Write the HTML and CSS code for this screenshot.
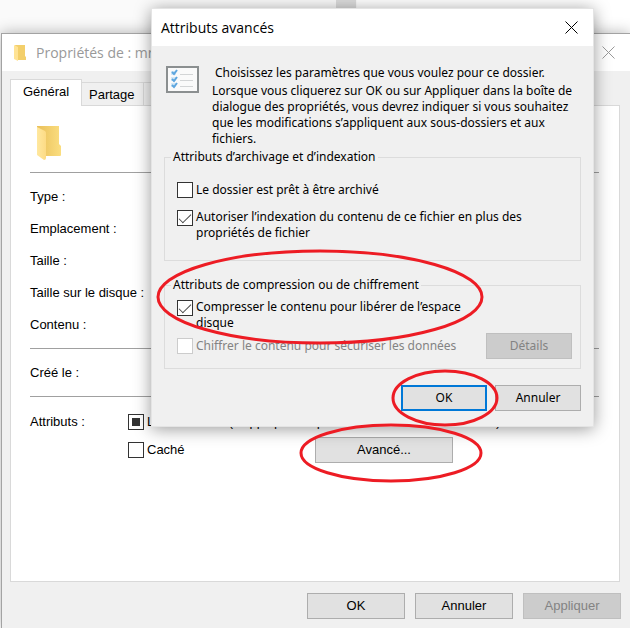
FILE: index.html
```html
<!DOCTYPE html>
<html lang="fr">
<head>
<meta charset="utf-8">
<title>Attributs avancés</title>
<link rel="stylesheet" href="styles.css">
</head>
<body>
<div class="backdrop"><span class="backdrop-bar"></span></div>

<main class="window properties">
  <header class="titlebar titlebar-inactive">
    <svg class="title-icon" width="14" height="18" viewBox="0 0 14 18" aria-hidden="true">
      <path fill="#f3cf6b" d="M1 1h10v11l1 1v3H4z"/>
      <path fill="#ffe394" d="M0 1l4 2v14l-4-2z"/>
    </svg>
    <h1>Propriétés de : mrtools</h1>
    <button class="close" aria-label="Fermer">
      <svg width="13" height="13" viewBox="0 0 13 13" aria-hidden="true"><path d="M.5.5l12 12M12.5.5l-12 12"/></svg>
    </button>
  </header>
  <nav class="tabs">
    <button class="tab tab-selected">Général</button>
    <button class="tab">Partage</button>
    <button class="tab">Sécurité</button>
  </nav>
  <section class="panel">
    <div class="summary">
      <svg width="26" height="36" viewBox="0 0 26 36" aria-hidden="true">
        <defs>
          <linearGradient id="back" x1="0" x2="1"><stop offset="0" stop-color="#e9bf59"/><stop offset="1" stop-color="#fbde80"/></linearGradient>
          <linearGradient id="front" x1="0" x2="1"><stop offset="0" stop-color="#ffe89f"/><stop offset="1" stop-color="#fddb85"/></linearGradient>
        </defs>
        <path fill="url(#back)" d="M0 0h22v18l2 2v9q0 1-1 1H9L1 28z"/>
        <path fill="url(#front)" d="M0 1l8 4q1 1 1 2v25q0 2-2 2L0 29z"/>
      </svg>
    </div>
    <hr>
    <ul class="facts">
      <li>Type :</li>
      <li>Emplacement :</li>
      <li>Taille :</li>
      <li>Taille sur le disque :</li>
      <li>Contenu :</li>
    </ul>
    <hr>
    <ul class="facts">
      <li>Créé le :</li>
    </ul>
    <hr>
    <div class="attributes">
      <span class="attributes-name">Attributs :</span>
      <div class="attributes-list">
        <label class="option"><input class="check check-mixed" type="checkbox">Lecture seule (s’applique uniquement aux fichiers du dossier)</label>
        <div class="attributes-row">
          <label class="option option-hidden"><input class="check" type="checkbox">Caché</label>
          <button class="button button-advanced">Avancé...</button>
        </div>
      </div>
    </div>
  </section>
  <footer class="actions">
    <button class="button">OK</button>
    <button class="button">Annuler</button>
    <button class="button" disabled>Appliquer</button>
  </footer>
</main>

<div class="window dialog" role="dialog" aria-label="Attributs avancés">
  <header class="titlebar">
    <h2>Attributs avancés</h2>
    <button class="close" aria-label="Fermer">
      <svg width="13" height="13" viewBox="0 0 13 13" aria-hidden="true"><path d="M.5.5l12 12M12.5.5l-12 12"/></svg>
    </button>
  </header>
  <div class="dialog-body">
    <div class="intro">
      <svg class="intro-icon" width="33" height="27" viewBox="0 0 33 27" aria-hidden="true">
        <rect x="1" y="1" width="31" height="25" fill="#fafafa" stroke="#8b8f90" stroke-width="2"/>
        <path stroke="#d3d5d6" stroke-width="1" d="M14 8.500h13M14 14.500h13M14 20.500h13"/>
        <path fill="#d5e9f8" d="M5 5h5v4H5zM5 11h5v4H5zM5 17h5v4H5z"/>
        <path fill="none" stroke="#5ea6de" stroke-width="2" d="M6 6l2 2 3-4M6 13l2 2 3-4M6 19l2 2 3-4"/>
      </svg>
      <div>
        <p class="lead">Choisissez les paramètres que vous voulez pour ce dossier.</p>
        <p>Lorsque vous cliquerez sur OK ou sur Appliquer dans la boîte de<br>dialogue des propriétés, vous devrez indiquer si vous souhaitez<br>que les modifications s’appliquent aux sous-dossiers et aux<br>fichiers.</p>
      </div>
    </div>
    <fieldset class="group group-archive">
      <legend>Attributs d’archivage et d’indexation</legend>
      <label class="option"><input class="check" type="checkbox"><span>Le dossier est prêt à être archivé</span></label>
      <label class="option option-tall"><input class="check" type="checkbox" checked><span>Autoriser l’indexation du contenu de ce fichier en plus des<br>propriétés de fichier</span></label>
    </fieldset>
    <fieldset class="group group-compress">
      <legend>Attributs de compression ou de chiffrement</legend>
      <label class="option option-tall"><input class="check" type="checkbox" checked><span>Compresser le contenu pour libérer de l’espace<br>disque</span></label>
      <div class="encrypt">
        <label class="option option-off"><input class="check" type="checkbox" disabled><span>Chiffrer le contenu pour sécuriser les données</span></label>
        <button class="button" disabled>Détails</button>
      </div>
    </fieldset>
    <div class="dialog-actions">
      <button class="button button-default">OK</button>
      <button class="button">Annuler</button>
    </div>
  </div>
</div>

<svg class="marks" width="630" height="628" viewBox="0 0 630 628" aria-hidden="true">
  <ellipse cx="320" cy="297" rx="162" ry="46"/>
  <ellipse cx="445" cy="398" rx="52" ry="27"/>
  <ellipse cx="391" cy="453" rx="90" ry="28"/>
</svg>
</body>
</html>
```
FILE: styles.css
```css
* {
  box-sizing: border-box;
}

body {
  margin: 0;
  min-height: 100vh;
  display: flex;
  flex-direction: column;
  position: relative;
  overflow: hidden;
  background: #fff;
  color: #000;
  font: 13px/16px "Liberation Sans", Arial, sans-serif;
}

h1, h2, p, ul {
  margin: 0;
  padding: 0;
  font-weight: 400;
}

button {
  font: inherit;
  color: inherit;
  padding: 0;
}

.backdrop {
  height: 33px;
  background: linear-gradient(90deg, #fafafa 357px, #fff 357px);
}

.backdrop-bar {
  display: block;
  width: 20px;
  height: 33px;
  margin-left: 336px;
  background: #dcdcdc;
}

.window {
  background: #f0f0f0;
}

.properties {
  flex: 1;
  display: flex;
  flex-direction: column;
  margin-left: 1px;
  border: solid #a3a3a3;
  border-width: 1px 0 0 1px;
  box-shadow: 0 0 14px rgba(0, 0, 0, 0.3);
}

.titlebar {
  display: flex;
  align-items: center;
  height: 37px;
  padding: 0 15px 0 9px;
  background: #fff;
}

.titlebar h1,
.titlebar h2 {
  flex: 1;
  font: 14px/20px "Open Sans", "Noto Sans", sans-serif;
}

.titlebar-inactive {
  padding: 0 15px 0 12px;
  color: #999;
}

.title-icon {
  margin-right: 8px;
}

.close {
  display: flex;
  border: 0;
  background: none;
}

.close path {
  stroke: currentColor;
  fill: none;
}

.tabs {
  display: flex;
  align-items: flex-end;
  height: 34px;
  padding-left: 8px;
}

.tab {
  height: 23px;
  padding: 2px 8px 0 7px;
  border: solid #d9d9d9;
  border-width: 1px 1px 0 0;
  background: #f0f0f0;
}

.tab-selected {
  height: 27px;
  width: 72px;
  padding: 0 0 2px;
  margin-bottom: -1px;
  border-left-width: 1px;
  background: #fff;
  z-index: 1;
}

.panel {
  flex: 1;
  margin: 0 10px 0 8px;
  padding: 0 20px 0 19px;
  border: 1px solid #d9d9d9;
  background: #fff;
}

.summary {
  height: 66px;
  padding: 20px 0 0 7px;
}

hr {
  height: 1px;
  margin: 0;
  border: 0;
  background: #a0a0a0;
}

.facts {
  padding: 8px 0 7px;
  line-height: 32px;
  list-style: none;
}

.attributes {
  display: flex;
  padding-top: 17px;
}

.attributes-name {
  width: 98px;
}

.attributes-row {
  display: flex;
  align-items: center;
  margin-top: 7px;
}

.option {
  display: flex;
  gap: 3px;
  white-space: nowrap;
}

.option-hidden {
  width: 187px;
}

.check {
  appearance: none;
  flex: none;
  display: grid;
  place-items: center;
  width: 16px;
  height: 16px;
  margin: 0;
  border: 1px solid #333;
  background: #fff;
}

.check:checked::before {
  content: "";
  width: 11px;
  height: 5px;
  margin-top: -3px;
  border: solid #444;
  border-width: 0 0 1px 1px;
  transform: rotate(-45deg);
}

.check-mixed::before {
  content: "";
  width: 8px;
  height: 8px;
  background: #333;
}

.check:disabled {
  border-color: #ccc;
}

.button {
  width: 98px;
  height: 26px;
  border: 1px solid #adadad;
  background: #e1e1e1;
}

.button:disabled {
  border-color: #bfbfbf;
  background: #ccc;
  color: #838383;
}

.button-advanced {
  width: 138px;
}

.actions {
  display: flex;
  justify-content: flex-end;
  gap: 10px;
  padding: 11px 9px 9px;
}

.dialog {
  position: absolute;
  top: 8px;
  left: 151px;
  right: 36px;
  z-index: 2;
  border: 1px solid #e4e4e4;
  box-shadow: 0 2px 16px rgba(0, 0, 0, 0.4);
  font: 12px/16px "Noto Sans", sans-serif;
}

.dialog-body {
  padding: 19px 12px 15px;
}

.dialog .button {
  width: 86px;
}

.intro {
  display: flex;
  gap: 13px;
  padding: 0 0 2px 2px;
}

.intro-icon {
  margin-top: 1px;
}

.intro p {
  white-space: nowrap;
}

.intro .lead {
  padding-left: 3px;
  margin-bottom: 2px;
}

.group {
  margin: 0;
  min-width: 0;
  border: 1px solid #dcdcdc;
}

.group legend {
  padding: 0 2px;
}

.group-archive {
  padding: 17px 8px 19px 6px;
}

.group-compress {
  margin-top: 16px;
  padding: 6px 8px 9px 6px;
}

.group .option {
  margin-left: 6px;
}

.option-tall .check {
  margin-top: 1px;
}

.group-archive .option-tall {
  margin-top: 11px;
}

.option-off {
  color: #838383;
}

.encrypt {
  display: flex;
  align-items: center;
  justify-content: space-between;
  margin-top: 2px;
}

.dialog-actions {
  display: flex;
  justify-content: flex-end;
  gap: 8px;
  margin-top: 16px;
}

.button-default {
  border: 2px solid #0078d7;
}

.marks {
  position: absolute;
  top: 0;
  left: 0;
  z-index: 3;
  pointer-events: none;
}

.marks ellipse {
  fill: none;
  stroke: #ed1c24;
  stroke-width: 3px;
}
```
